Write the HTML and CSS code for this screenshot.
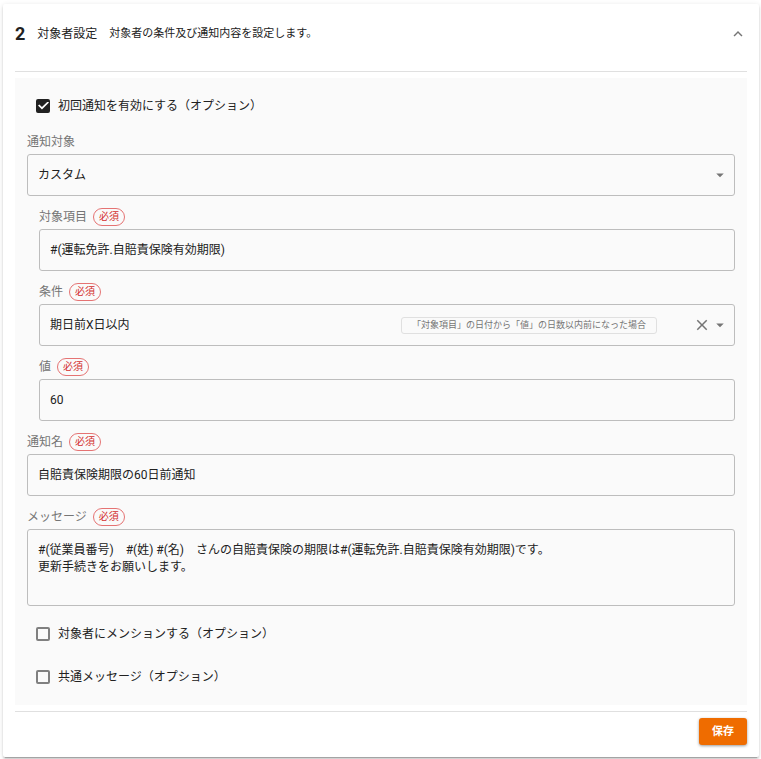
FILE: index.html
```
<!DOCTYPE html>
<html lang="ja">
<head>
    <meta charset="UTF-8">
    <meta name="viewport" content="width=device-width, initial-scale=1.0">
    <title>対象者設定</title>

    <link rel="stylesheet" href="styles.css">
</head>
<body>
    <form class="card">
        <header class="card-header">
            <span class="step-number">2</span>
            <h2>対象者設定</h2>
            <p>対象者の条件及び通知内容を設定します。</p>
            <button type="button" class="icon-button toggle" aria-label="閉じる">
                <svg width="18" height="18" viewBox="0 0 24 24"><path d="M12 8l-6 6 1.41 1.41L12 10.83l4.59 4.58L18 14z"/></svg>
            </button>
        </header>

        <div class="panel">
            <label class="check-row">
                <input type="checkbox" name="firstNotice" checked>
                初回通知を有効にする（オプション）
            </label>

            <div class="field">
                <div class="field-label">
                    <label for="target">通知対象</label>
                </div>
                <div class="control">
                    <select id="target" name="target">
                        <option>カスタム</option>
                    </select>
                    <svg class="arrow" width="18" height="18" viewBox="0 0 24 24"><path d="M7 10l5 5 5-5z"/></svg>
                </div>
            </div>

            <!-- カスタム条件 -->
            <div class="nested">
                <div class="field">
                    <div class="field-label">
                        <label for="item">対象項目</label>
                        <span class="required">必須</span>
                    </div>
                    <div class="control">
                        <input type="text" id="item" name="item" value="#(運転免許.自賠責保険有効期限)">
                    </div>
                </div>

                <div class="field">
                    <div class="field-label">
                        <label for="condition">条件</label>
                        <span class="required">必須</span>
                    </div>
                    <div class="control">
                        <select id="condition" name="condition">
                            <option>期日前X日以内</option>
                        </select>
                        <span class="hint">「対象項目」の日付から「値」の日数以内前になった場合</span>
                        <button type="button" class="icon-button" aria-label="クリア">
                            <svg width="18" height="18" viewBox="0 0 24 24"><path d="M19 6.41L17.59 5 12 10.59 6.41 5 5 6.41 10.59 12 5 17.59 6.41 19 12 13.41 17.59 19 19 17.59 13.41 12z"/></svg>
                        </button>
                        <svg class="arrow" width="18" height="18" viewBox="0 0 24 24"><path d="M7 10l5 5 5-5z"/></svg>
                    </div>
                </div>

                <div class="field">
                    <div class="field-label">
                        <label for="value">値</label>
                        <span class="required">必須</span>
                    </div>
                    <div class="control">
                        <input type="text" id="value" name="value" value="60">
                    </div>
                </div>
            </div>

            <div class="field">
                <div class="field-label">
                    <label for="noticeName">通知名</label>
                    <span class="required">必須</span>
                </div>
                <div class="control">
                    <input type="text" id="noticeName" name="noticeName" value="自賠責保険期限の60日前通知">
                </div>
            </div>

            <div class="field">
                <div class="field-label">
                    <label for="message">メッセージ</label>
                    <span class="required">必須</span>
                </div>
                <div class="control">
                    <textarea id="message" name="message" rows="3">#(従業員番号)　#(姓) #(名)　さんの自賠責保険の期限は#(運転免許.自賠責保険有効期限)です。
更新手続きをお願いします。</textarea>
                </div>
            </div>

            <label class="check-row">
                <input type="checkbox" name="mention">
                対象者にメンションする（オプション）
            </label>
            <label class="check-row">
                <input type="checkbox" name="commonMessage">
                共通メッセージ（オプション）
            </label>
        </div>

        <footer class="card-footer">
            <button type="submit" class="save">保存</button>
        </footer>
    </form>
</body>
</html>
```
FILE: styles.css
```
* {
    box-sizing: border-box;
}

body {
    margin: 0;
    padding: 4px 2px 2px 3px;
    background-color: #fff;
    color: #212121;
    font-family: Roboto, "Noto Sans CJK JP", sans-serif;
    font-size: 12px;
    line-height: 18px;
}

input,
select,
textarea,
button {
    font: inherit;
    color: inherit;
}

svg {
    display: block;
    fill: #757575;
}

.card {
    padding: 0 12px 12px;
    border-radius: 2px;
    background-color: #fff;
    box-shadow: 0 3px 1px -2px rgba(0, 0, 0, 0.2),
                0 2px 2px 0 rgba(0, 0, 0, 0.14),
                0 1px 5px 0 rgba(0, 0, 0, 0.12);
}

/* Header */
.card-header {
    display: flex;
    align-items: center;
    gap: 12px;
    height: 68px;
    padding-bottom: 7px;
    border-bottom: 1px solid #e0e0e0;
}

.step-number {
    font-size: 18px;
    font-weight: bold;
}

.card-header h2 {
    margin: 0;
    font-size: 12px;
    font-weight: normal;
}

.card-header p {
    margin: 0;
    font-size: 11px;
}

.icon-button {
    padding: 0;
    border: none;
    background: none;
    cursor: pointer;
}

.toggle {
    margin-left: auto;
}

/* Panel */
.panel {
    margin: 6px 0;
    padding: 6px 12px 7px;
    background-color: #fafafa;
}

.nested {
    padding-left: 12px;
}

.check-row {
    display: flex;
    align-items: center;
    gap: 8px;
    height: 43px;
    padding-left: 9px;
}

.check-row input {
    appearance: none;
    display: grid;
    place-items: center;
    width: 14px;
    height: 14px;
    margin: 0;
    border: 2px solid #808080;
    border-radius: 2px;
}

.check-row input:checked {
    border-color: #212121;
    background-color: #212121;
}

.check-row input:checked::before {
    content: "";
    width: 11px;
    height: 8px;
    background-color: #fff;
    clip-path: polygon(0 50%, 12% 36%, 36% 68%, 88% 0, 100% 14%, 36% 100%);
}

/* Fields */
.field {
    margin-bottom: 12px;
}

.check-row + .field {
    margin-top: 6px;
}

.field + .check-row {
    margin-top: -6px;
}

.field-label {
    display: flex;
    gap: 6px;
    height: 21px;
    color: #757575;
}

.required {
    height: 18px;
    padding: 0 5px;
    border: 1px solid #e57373;
    border-radius: 9px;
    color: #d32f2f;
    font-size: 10px;
    line-height: 16px;
}

.control {
    display: flex;
    align-items: center;
    min-height: 42px;
    padding: 0 5px 0 10px;
    border: 1px solid #bdbdbd;
    border-radius: 3px;
}

.control input,
.control select,
.control textarea {
    appearance: none;
    flex: 1;
    min-width: 0;
    padding: 0;
    border: none;
    outline: none;
    background: none;
}

.control textarea {
    height: 75px;
    padding: 12px 0;
    line-height: 17px;
    resize: none;
}

.hint {
    margin-right: 36px;
    padding: 0 10px;
    border: 1px solid #e0e0e0;
    border-radius: 3px;
    color: #757575;
    font-size: 9px;
    line-height: 15px;
}

/* Footer */
.card-footer {
    display: flex;
    justify-content: flex-end;
    padding-top: 6px;
    border-top: 1px solid #e0e0e0;
}

.save {
    height: 27px;
    padding: 0 13px;
    border: none;
    border-radius: 3px;
    background-color: #ef6c00;
    color: #fff;
    font-size: 11px;
    font-weight: bold;
    box-shadow: 0 1px 3px rgba(0, 0, 0, 0.4);
    cursor: pointer;
}
```
